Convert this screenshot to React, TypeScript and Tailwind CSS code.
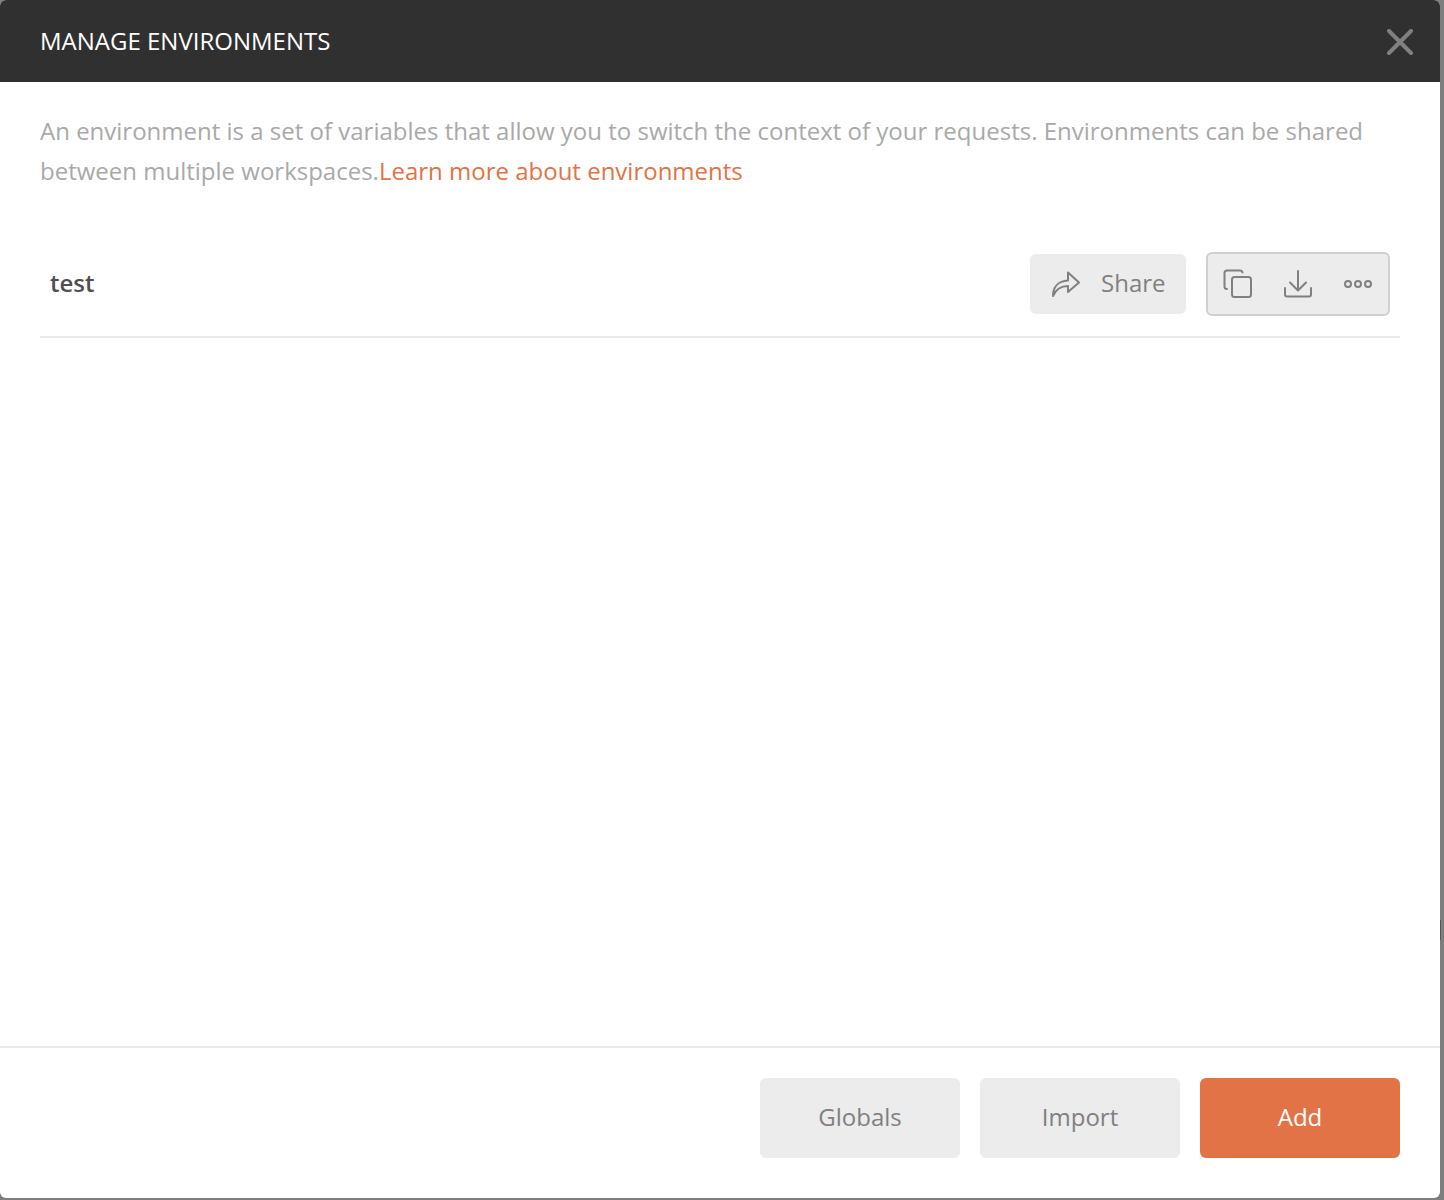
import React from "react";

function ShareIcon() {
  return (
    <svg width="30" height="28" viewBox="0 0 30 28" fill="none" stroke="#808080" strokeWidth="2" strokeLinejoin="round" strokeLinecap="round">
      <path d="M2 26 C2 17 7 11 17 10.5 L17 2.5 L28 12.5 L17 22 L17 16 C10 16 5 19 2 26 Z" />
    </svg>
  );
}
function CopyIcon() {
  return (
    <svg width="30" height="30" viewBox="0 0 30 30" fill="none" stroke="#808080" strokeWidth="2" strokeLinejoin="round" strokeLinecap="round">
      <path d="M4 20 Q1.5 20 1.5 17.5 V4 Q1.5 1.5 4 1.5 H17 Q19 1.5 19.5 3.5" />
      <rect x="9" y="8" width="19" height="20" rx="2.5" />
    </svg>
  );
}
function DownloadIcon() {
  return (
    <svg width="30" height="30" viewBox="0 0 30 30" fill="none" stroke="#808080" strokeWidth="2" strokeLinejoin="round" strokeLinecap="round">
      <path d="M15 2 V21 M7 13.5 L15 21.5 L23 13.5" />
      <path d="M2 19 V25.5 Q2 27.5 4 27.5 H26 Q28 27.5 28 25.5 V19" />
    </svg>
  );
}
function MoreIcon() {
  return (
    <svg width="30" height="12" viewBox="0 0 30 12" fill="none" stroke="#808080" strokeWidth="2">
      <circle cx="5" cy="6" r="3" />
      <circle cx="15" cy="6" r="3" />
      <circle cx="25" cy="6" r="3" />
    </svg>
  );
}

export default function App() {
  return (
    <div className="relative w-[1444px] h-[1200px] bg-[#7e7e7e] overflow-hidden font-['Open_Sans',sans-serif]">
      <div className="w-[1440px] h-[1198px] bg-white rounded-[6px] overflow-hidden flex flex-col">
        <div className="h-[82px] shrink-0 bg-[#303030] pl-10 pr-7 flex items-center justify-between">
          <span className="text-[24px] text-white">MANAGE ENVIRONMENTS</span>
          <svg width="26" height="26" viewBox="0 0 26 26" fill="none" stroke="#808080" strokeWidth="4" strokeLinecap="round" className="mr-[-1px] mt-[2px]">
            <path d="M2 2 L24 24 M24 2 L2 24" />
          </svg>
        </div>
        <div className="flex-1 flex flex-col px-10 pt-[29px]">
          <p className="text-[24px] leading-[40px] text-[#a9a9a9]">
            An environment is a set of variables that allow you to switch the context of your requests. Environments can be shared between multiple workspaces.
            <span className="text-[#e27347]">Learn more about environments</span>
          </p>
          <div className="mt-[41px] h-[106px] border-b-2 border-[#eaeaea] flex items-center justify-between px-[10px]">
            <span className="text-[24px] font-semibold text-[#505050] mb-[2px]">test</span>
            <div className="flex items-center gap-5">
              <div className="w-[156px] h-[60px] rounded-[6px] bg-[#ececec] flex items-center pl-[21px] gap-[20px] text-[24px] text-[#808080]">
                <ShareIcon />
                <span className="mb-[2px]">Share</span>
              </div>
              <div className="w-[184px] h-[64px] rounded-[6px] bg-[#ececec] border-2 border-[#d0d0d0] flex items-center justify-between px-[15px]">
                <CopyIcon />
                <DownloadIcon />
                <MoreIcon />
              </div>
            </div>
          </div>
        </div>
        <div className="h-[152px] shrink-0 border-t-2 border-[#eaeaea] flex items-start justify-end gap-5 pt-[30px] pr-10">
          <div className="w-[200px] h-[80px] pb-[2px] rounded-[6px] bg-[#ececec] flex items-center justify-center text-[24px] text-[#808080]">Globals</div>
          <div className="w-[200px] h-[80px] pb-[2px] rounded-[6px] bg-[#ececec] flex items-center justify-center text-[24px] text-[#808080]">Import</div>
          <div className="w-[200px] h-[80px] pb-[2px] rounded-[6px] bg-[#e27347] flex items-center justify-center text-[24px] text-white">Add</div>
        </div>
      </div>
      <div className="absolute left-[1440px] top-[920px] w-[1px] h-[20px] bg-[#555555]" />
    </div>
  );
}
